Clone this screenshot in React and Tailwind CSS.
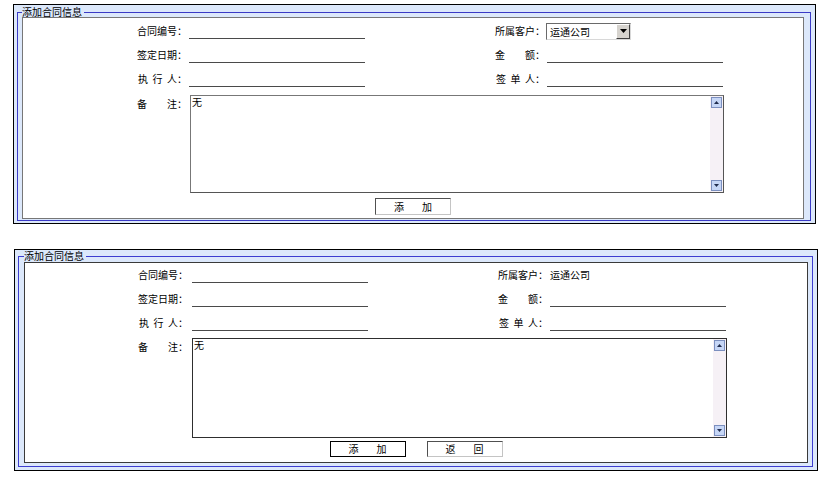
import React from 'react'

const ScrollArrow = ({ dir }) => (
  <svg width="11" height="11" viewBox="0 0 11 11" className="block">
    <rect x="0.5" y="0.5" width="10" height="10" fill="#c6d6f6" stroke="#7b8fbf" />
    {dir === 'up' ? (
      <polygon points="3,7 8,7 5.5,4" fill="#1f2b4d" />
    ) : (
      <polygon points="3,4 8,4 5.5,7" fill="#1f2b4d" />
    )}
  </svg>
)

function Label({ children }) {
  return (
    <div className="w-[50px] shrink-0 text-right whitespace-pre text-[10px] leading-[12px] text-black">
      {children}
    </div>
  )
}

function Line({ gap }) {
  return <div className={`${gap} w-[176px] h-[16px] border-b border-[#4a4a4a]`} />
}

function Select() {
  return (
    <div className="ml-[1px] w-[85px] h-[17px] flex border border-t-[#6a6a6a] border-l-[#6a6a6a] border-r-[#d8d8d8] border-b-[#d8d8d8] bg-white">
      <div className="flex-1 pl-[3px] text-[10px] leading-[15px] text-black">运通公司</div>
      <div className="w-[14px] h-[15px] bg-[#d6d3ce] border border-t-white border-l-white border-r-[#404040] border-b-[#404040] flex items-center justify-center">
        <svg width="7" height="4" viewBox="0 0 7 4">
          <polygon points="0,0 7,0 3.5,4" fill="#000" />
        </svg>
      </div>
    </div>
  )
}

function Button({ text, focused }) {
  const [a, b] = text
  return (
    <div
      className={`w-[76px] h-full bg-white flex items-center justify-center gap-[18px] text-[10px] leading-[12px] text-black border ${
        focused
          ? 'border-black'
          : 'border-t-[#505050] border-l-[#505050] border-r-[#c4c4c4] border-b-[#c4c4c4]'
      }`}
    >
      <span>{a}</span>
      <span>{b}</span>
    </div>
  )
}

function Panel({ second }) {
  const labelGap = second ? 'ml-[113px]' : 'ml-[114px]'
  const inputGap = second ? 'ml-[4px]' : 'ml-[2px]'
  const midGap = 'ml-[130px]'
  const rightGap = second ? 'ml-[2px]' : 'ml-[2px]'

  return (
    <div
      className={
        second
          ? 'mt-[25px] ml-[1px] w-[804px] border border-black bg-[#dce8fb] pt-[1px] pl-[3px] pr-[4px] pb-[3px]'
          : 'w-[803px] border border-black bg-[#dce8fb] pt-[2px] pl-[3px] pr-[4px] pb-[2px]'
      }
    >
      <fieldset
        className={
          second
            ? 'border border-[#3d3dd0] pt-[1px] pl-[5px] pr-[4px] pb-[3px]'
            : 'border border-[#3a3ac6] pt-0 pl-[4px] pr-[6px] pb-[1px]'
        }
      >
        <legend className="text-[10px] leading-[10px] pr-[2px] text-black">添加合同信息</legend>
        <div
          className={`bg-white border ${
            second ? 'h-[201px] border-[#3a3a3a]' : 'h-[202px] border-[#777777]'
          }`}
        >
          <div className={second ? 'pt-0' : 'pt-[1px]'}>
            <div className="flex items-center h-[24px]">
              <div className={labelGap}>
                <Label>合同编号：</Label>
              </div>
              <Line gap={inputGap} />
              <div className={midGap}>
                <Label>所属客户：</Label>
              </div>
              {second ? (
                <div className="ml-[2px] text-[10px] leading-[12px] text-black">运通公司</div>
              ) : (
                <Select />
              )}
            </div>
            <div className="flex items-center h-[24px]">
              <div className={labelGap}>
                <Label>签定日期：</Label>
              </div>
              <Line gap={inputGap} />
              <div className={midGap}>
                <Label>金　　额：</Label>
              </div>
              <Line gap={rightGap} />
            </div>
            <div className="flex items-center h-[24px]">
              <div className={labelGap}>
                <Label>执  行  人：</Label>
              </div>
              <Line gap={inputGap} />
              <div className={midGap}>
                <Label>签  单  人：</Label>
              </div>
              <Line gap={rightGap} />
            </div>
          </div>

          <div className={`flex items-start ${second ? 'mt-[3px]' : 'mt-[4px]'}`}>
            <div className={`${labelGap} pt-[3px]`}>
              <Label>备　　注：</Label>
            </div>
            <div
              className={`${second ? 'ml-[4px] w-[535px] h-[100px] border-[#2e2e2e]' : 'ml-[3px] w-[534px] h-[98px] border-t-[#777] border-l-[#777] border-r-[#555] border-b-[#555]'} flex border bg-white`}
            >
              <div className="flex-1 pl-[1px] text-[10px] leading-[12px] text-black">无</div>
              <div className="w-[13px] bg-[#f6f1f6] flex flex-col justify-between items-center py-[1px]">
                <ScrollArrow dir="up" />
                <ScrollArrow dir="down" />
              </div>
            </div>
          </div>

          <div
            className={`flex justify-center gap-[21px] ${
              second ? 'mt-[3px] h-[16px]' : 'mt-[5px] h-[17px]'
            }`}
          >
            <Button text={['添', '加']} focused={second} />
            {second && <Button text={['返', '回']} />}
          </div>
        </div>
      </fieldset>
    </div>
  )
}

export default function App() {
  return (
    <div className="w-[822px] h-[479px] bg-white pl-[13px] pt-[4px] font-['Noto_Sans_CJK_SC','Noto_Sans',sans-serif]">
      <Panel />
      <Panel second />
    </div>
  )
}
